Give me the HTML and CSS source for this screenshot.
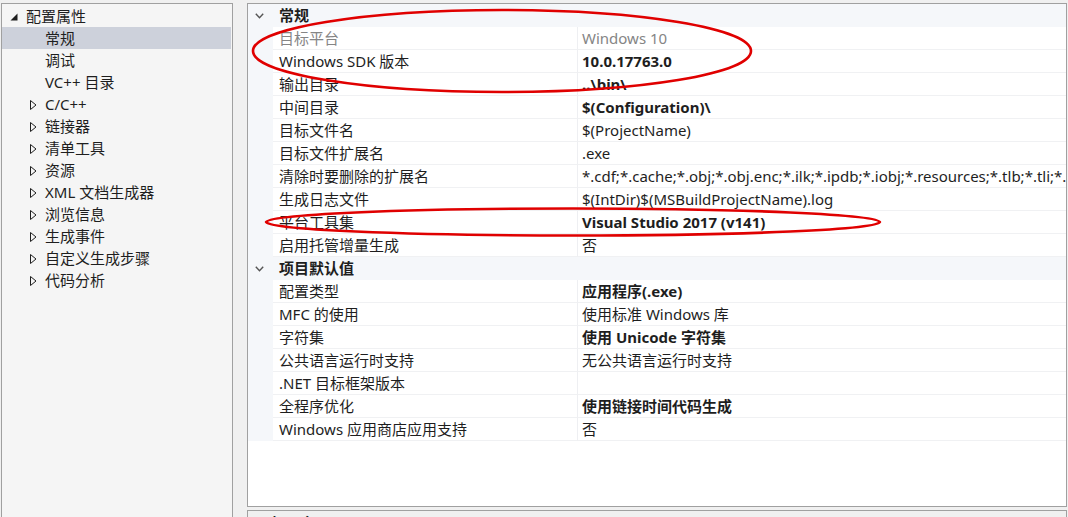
FILE: index.html
```html
<!DOCTYPE html>
<html lang="zh-CN">
<head>
<meta charset="utf-8">
<title>属性页</title>
<link rel="stylesheet" href="styles.css">
</head>
<body>
<div class="layout">
  <div class="tree">
    <div class="tree-row root">
      <svg class="arrow-root" width="8" height="8" viewBox="0 0 8 8"><polygon points="7.5,0.5 7.5,7.5 0.5,7.5" fill="#1e1e1e"/></svg>
      <span>配置属性</span>
    </div>
    <div class="tree-row child selected"><span>常规</span></div>
    <div class="tree-row child"><span>调试</span></div>
    <div class="tree-row child"><span>VC++ 目录</span></div>
    <div class="tree-row child exp"><svg class="arrow-exp" width="7" height="10" viewBox="0 0 7 10"><polygon points="0.5,0.5 6,5 0.5,9.5" fill="none" stroke="#1e1e1e" stroke-width="1"/></svg><span>C/C++</span></div>
    <div class="tree-row child exp"><svg class="arrow-exp" width="7" height="10" viewBox="0 0 7 10"><polygon points="0.5,0.5 6,5 0.5,9.5" fill="none" stroke="#1e1e1e" stroke-width="1"/></svg><span>链接器</span></div>
    <div class="tree-row child exp"><svg class="arrow-exp" width="7" height="10" viewBox="0 0 7 10"><polygon points="0.5,0.5 6,5 0.5,9.5" fill="none" stroke="#1e1e1e" stroke-width="1"/></svg><span>清单工具</span></div>
    <div class="tree-row child exp"><svg class="arrow-exp" width="7" height="10" viewBox="0 0 7 10"><polygon points="0.5,0.5 6,5 0.5,9.5" fill="none" stroke="#1e1e1e" stroke-width="1"/></svg><span>资源</span></div>
    <div class="tree-row child exp"><svg class="arrow-exp" width="7" height="10" viewBox="0 0 7 10"><polygon points="0.5,0.5 6,5 0.5,9.5" fill="none" stroke="#1e1e1e" stroke-width="1"/></svg><span>XML 文档生成器</span></div>
    <div class="tree-row child exp"><svg class="arrow-exp" width="7" height="10" viewBox="0 0 7 10"><polygon points="0.5,0.5 6,5 0.5,9.5" fill="none" stroke="#1e1e1e" stroke-width="1"/></svg><span>浏览信息</span></div>
    <div class="tree-row child exp"><svg class="arrow-exp" width="7" height="10" viewBox="0 0 7 10"><polygon points="0.5,0.5 6,5 0.5,9.5" fill="none" stroke="#1e1e1e" stroke-width="1"/></svg><span>生成事件</span></div>
    <div class="tree-row child exp"><svg class="arrow-exp" width="7" height="10" viewBox="0 0 7 10"><polygon points="0.5,0.5 6,5 0.5,9.5" fill="none" stroke="#1e1e1e" stroke-width="1"/></svg><span>自定义生成步骤</span></div>
    <div class="tree-row child exp"><svg class="arrow-exp" width="7" height="10" viewBox="0 0 7 10"><polygon points="0.5,0.5 6,5 0.5,9.5" fill="none" stroke="#1e1e1e" stroke-width="1"/></svg><span>代码分析</span></div>
  </div>

  <div class="right">
    <div class="grid">
      <div class="cat">
        <div class="cat-icon"><svg width="9" height="6" viewBox="0 0 9 6"><polyline points="0.8,0.8 4.5,4.8 8.2,0.8" fill="none" stroke="#555" stroke-width="1.4"/></svg></div>
        <div class="cat-name">常规</div>
      </div>
      <div class="prop"><div class="gut"></div><div class="name ro">目标平台</div><div class="val ro">Windows 10</div></div>
      <div class="prop"><div class="gut"></div><div class="name">Windows SDK 版本</div><div class="val b">10.0.17763.0</div></div>
      <div class="prop"><div class="gut"></div><div class="name">输出目录</div><div class="val b">..\bin\</div></div>
      <div class="prop"><div class="gut"></div><div class="name">中间目录</div><div class="val b">$(Configuration)\</div></div>
      <div class="prop"><div class="gut"></div><div class="name">目标文件名</div><div class="val">$(ProjectName)</div></div>
      <div class="prop"><div class="gut"></div><div class="name">目标文件扩展名</div><div class="val">.exe</div></div>
      <div class="prop"><div class="gut"></div><div class="name">清除时要删除的扩展名</div><div class="val">*.cdf;*.cache;*.obj;*.obj.enc;*.ilk;*.ipdb;*.iobj;*.resources;*.tlb;*.tli;*.tlh;*.tmp;*.rsp;*.pgc;*.pgd;*.meta</div></div>
      <div class="prop"><div class="gut"></div><div class="name">生成日志文件</div><div class="val">$(IntDir)$(MSBuildProjectName).log</div></div>
      <div class="prop"><div class="gut"></div><div class="name">平台工具集</div><div class="val b">Visual Studio 2017 (v141)</div></div>
      <div class="prop"><div class="gut"></div><div class="name">启用托管增量生成</div><div class="val">否</div></div>
      <div class="cat">
        <div class="cat-icon"><svg width="9" height="6" viewBox="0 0 9 6"><polyline points="0.8,0.8 4.5,4.8 8.2,0.8" fill="none" stroke="#555" stroke-width="1.4"/></svg></div>
        <div class="cat-name">项目默认值</div>
      </div>
      <div class="prop"><div class="gut"></div><div class="name">配置类型</div><div class="val b">应用程序(.exe)</div></div>
      <div class="prop"><div class="gut"></div><div class="name">MFC 的使用</div><div class="val">使用标准 Windows 库</div></div>
      <div class="prop"><div class="gut"></div><div class="name">字符集</div><div class="val b">使用 Unicode 字符集</div></div>
      <div class="prop"><div class="gut"></div><div class="name">公共语言运行时支持</div><div class="val">无公共语言运行时支持</div></div>
      <div class="prop"><div class="gut"></div><div class="name">.NET 目标框架版本</div><div class="val"></div></div>
      <div class="prop"><div class="gut"></div><div class="name">全程序优化</div><div class="val b">使用链接时间代码生成</div></div>
      <div class="prop"><div class="gut"></div><div class="name">Windows 应用商店应用支持</div><div class="val">否</div></div>
    </div>
    <div class="desc"><div class="desc-title">目标平台</div></div>
  </div>
</div>

<svg class="marks" width="1068" height="517" viewBox="0 0 1068 517">
  <ellipse cx="502" cy="51" rx="249" ry="41" fill="none" stroke="#e00000" stroke-width="2.6"/>
  <ellipse cx="573" cy="222" rx="307" ry="13.5" fill="none" stroke="#e00000" stroke-width="2.6"/>
</svg>
</body>
</html>
```

FILE: styles.css
```css
html, body {
  margin: 0;
  padding: 0;
}
body {
  background: #f0f0f0;
  width: 1068px;
  height: 517px;
  overflow: hidden;
  position: relative;
  font-family: "Noto Sans", "Noto Sans CJK SC", sans-serif;
  font-size: 15px;
  color: #1e1e1e;
}
.layout {
  display: flex;
  gap: 14px;
  padding: 3px 0 0 1px;
  height: 517px;
  box-sizing: border-box;
  overflow: hidden;
}
.tree {
  width: 230px;
  flex: none;
  background: #f5f5f5;
  border: 1px solid #a0a0a0;
  border-bottom: none;
  padding-top: 1px;
}
.tree-row {
  height: 22px;
  line-height: 22px;
  display: flex;
  align-items: center;
  white-space: nowrap;
  margin-right: 1px;
}
.tree-row.root {
  padding-left: 8px;
}
.arrow-root {
  margin-right: 8px;
  margin-top: 2px;
}
.tree-row.child {
  padding-left: 43px;
}
.tree-row.child.exp {
  padding-left: 28px;
}
.arrow-exp {
  margin-right: 8px;
  margin-top: 1px;
}
.tree-row.selected {
  background: #cdd1db;
}

.right {
  width: 820px;
  flex: none;
  display: flex;
  flex-direction: column;
  gap: 3px;
}
.grid {
  flex: none;
  height: 502px;
  border: 1px solid #a0a0a0;
  background: #ffffff;
  overflow: hidden;
}
.cat {
  display: flex;
  height: 23px;
  line-height: 23px;
  background: #f5f7fa;
}
.cat-icon {
  width: 31px;
  flex: none;
  display: flex;
  align-items: center;
  padding-left: 7px;
  box-sizing: border-box;
}
.cat-name {
  font-weight: bold;
}
.prop {
  display: grid;
  grid-template-columns: 25px 304px 1fr;
  height: 23px;
  line-height: 22px;
}
.gut {
  background: #f5f7fa;
}
.name, .val {
  border-bottom: 1px solid #f0f1f3;
  white-space: nowrap;
  overflow: hidden;
}
.name {
  padding-left: 6px;
}
.val {
  padding-left: 4px;
  border-left: 1px solid #eeeff2;
}
.ro {
  color: #858585;
}
.b {
  font-weight: bold;
}
.desc {
  flex: 1;
  min-height: 0;
  overflow: hidden;
  border: 1px solid #a0a0a0;
  border-bottom: none;
  background: #f0f0f0;
  padding: 2px 0 0 8px;
}
.desc-title {
  font-weight: bold;
  line-height: 20px;
}
.marks {
  position: absolute;
  left: 0;
  top: 0;
  pointer-events: none;
}
```
